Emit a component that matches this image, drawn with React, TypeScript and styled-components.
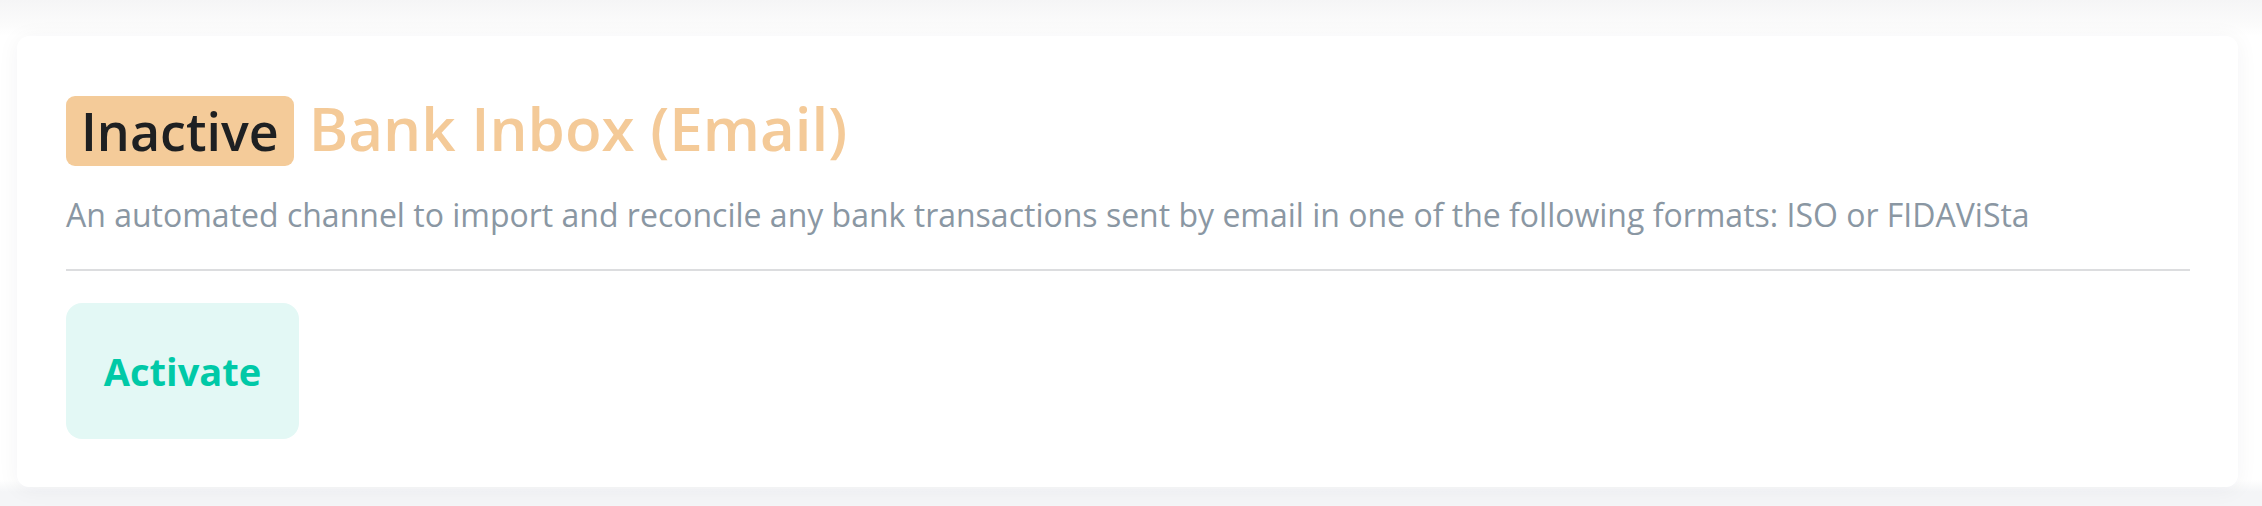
import styled, { createGlobalStyle } from 'styled-components';

const GlobalStyle = createGlobalStyle`
  html, body {
    margin: 0;
    padding: 0;
  }
  body {
    font-family: 'Open Sans', 'Liberation Sans', sans-serif;
    background: linear-gradient(
      to bottom,
      #f5f5f6 0px,
      #fbfbfb 24px,
      #ffffff 36px,
      #ffffff 480px,
      #f4f5f7 492px
    );
    min-height: 506px;
  }
`;

type Channel = {
  status: string;
  name: string;
  description: string;
};

const channel: Channel = {
  status: 'Inactive',
  name: 'Bank Inbox (Email)',
  description:
    'An automated channel to import and reconcile any bank transactions sent by email in one of the following formats: ISO or FIDAViSta',
};

function App(): React.ReactElement {
  return (
    <>
      <GlobalStyle />
      <Page>
        <Card>
          <Heading>
            <Status>{channel.status}</Status>
            <Title>{channel.name}</Title>
          </Heading>
          <Description>{channel.description}</Description>
          <Divider />
          <Actions>
            <ActivateButton type="button">Activate</ActivateButton>
          </Actions>
        </Card>
      </Page>
    </>
  );
}

export default App;

const Page = styled.main`
  padding: 36px 24px 19px 17px;
`;

const Card = styled.section`
  background: #ffffff;
  border-radius: 12px;
  padding: 60px 48px 48px 49px;
  box-shadow: 0 2px 22px rgba(30, 40, 60, 0.05);
`;

const Heading = styled.div`
  display: flex;
  align-items: baseline;
  gap: 15px;
`;

const Status = styled.span`
  display: inline-block;
  background: #f4cb99;
  color: #1e2022;
  font-size: 52px;
  font-weight: 600;
  line-height: 70px;
  padding: 0 15px;
  border-radius: 9px;
`;

const Title = styled.h2`
  margin: 0;
  color: #f4ca98;
  font-size: 60px;
  font-weight: 600;
  line-height: 64px;
`;

const Description = styled.p`
  margin: 29px 0 0;
  color: #8a97a3;
  font-size: 32px;
  line-height: 40px;
`;

const Divider = styled.hr`
  margin: 34px 0 0;
  border: 0;
  border-top: 2px solid #dcdddf;
`;

const Actions = styled.div`
  display: flex;
  padding-top: 32px;
`;

const ActivateButton = styled.button`
  width: 233px;
  height: 136px;
  border: 0;
  border-radius: 16px;
  background: #e3f8f5;
  color: #00c9a7;
  font-family: 'Open Sans', 'Liberation Sans', sans-serif;
  font-size: 38px;
  font-weight: 700;
  cursor: pointer;
`;
